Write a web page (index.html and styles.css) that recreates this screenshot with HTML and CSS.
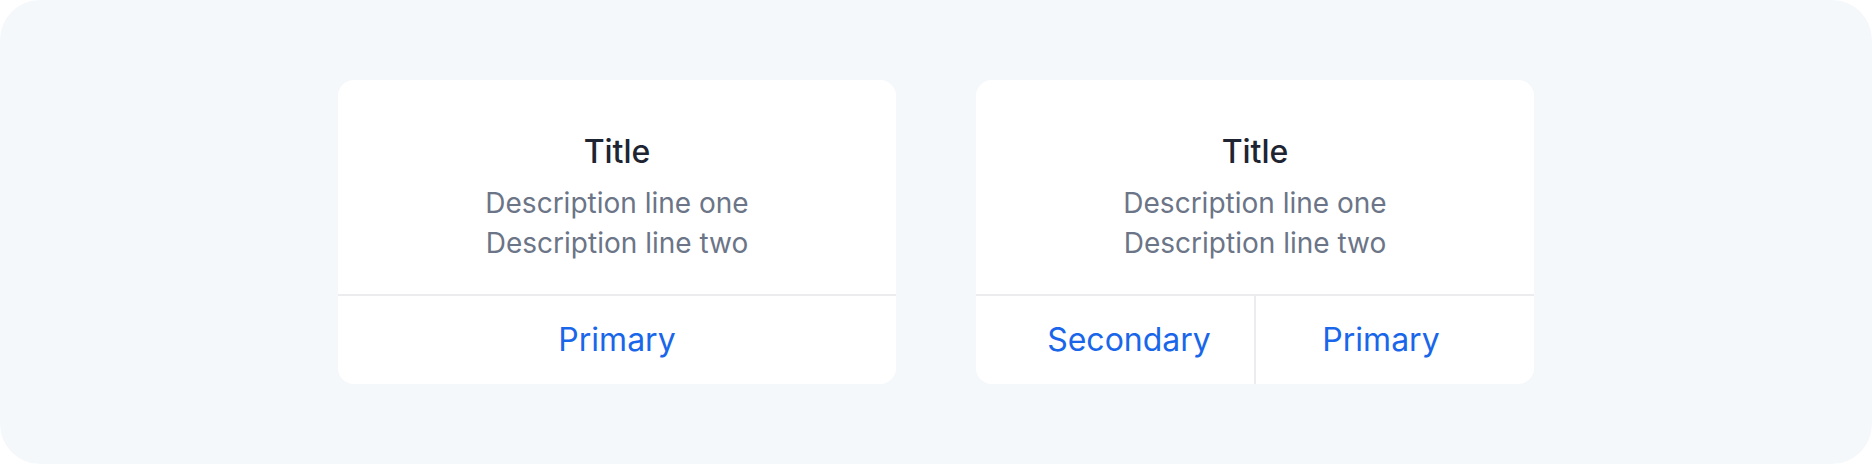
FILE: index.html
```html
<!DOCTYPE html>
<html lang="en">
<head>
<meta charset="utf-8">
<title>Dialogs</title>
<link rel="stylesheet" href="styles.css">
</head>
<body>
<main class="stage">
  <section class="dialog">
    <div class="dialog-body">
      <h2 class="dialog-title">Title</h2>
      <p class="dialog-desc">Description line one<br>Description line two</p>
    </div>
    <div class="dialog-actions">
      <button class="action">Primary</button>
    </div>
  </section>
  <section class="dialog">
    <div class="dialog-body">
      <h2 class="dialog-title">Title</h2>
      <p class="dialog-desc">Description line one<br>Description line two</p>
    </div>
    <div class="dialog-actions">
      <button class="action">Secondary</button>
      <button class="action">Primary</button>
    </div>
  </section>
</main>
</body>
</html>
```

FILE: styles.css
```css
html, body {
  margin: 0;
  padding: 0;
  background: #ffffff;
}

body {
  font-family: Inter, "Noto Sans", "Liberation Sans", sans-serif;
}

.stage {
  box-sizing: border-box;
  width: 1872px;
  height: 464px;
  background: #f5f8fb;
  border-radius: 40px;
  display: flex;
  justify-content: center;
  align-items: center;
  gap: 80px;
}

.dialog {
  width: 558px;
  height: 304px;
  background: #ffffff;
  border-radius: 16px;
  display: flex;
  flex-direction: column;
  overflow: hidden;
}

.dialog-body {
  box-sizing: border-box;
  height: 214px;
  padding-top: 52px;
  text-align: center;
}

.dialog-title {
  margin: 0;
  font-size: 32px;
  line-height: 40px;
  font-weight: 500;
  color: #1e2431;
}

.dialog-desc {
  margin: 11px 0 0;
  font-size: 28px;
  line-height: 40px;
  font-weight: 400;
  color: #6b7587;
}

.dialog-actions {
  flex: 1;
  display: flex;
  padding: 0 28px;
  border-top: 2px solid #ececee;
}

.action {
  flex: 1;
  margin: 0;
  padding: 0;
  border: 0;
  background: transparent;
  font-family: inherit;
  font-size: 32px;
  line-height: 88px;
  font-weight: 400;
  color: #1a66ea;
  text-align: center;
}

.action + .action {
  border-left: 2px solid #ececee;
}
```
